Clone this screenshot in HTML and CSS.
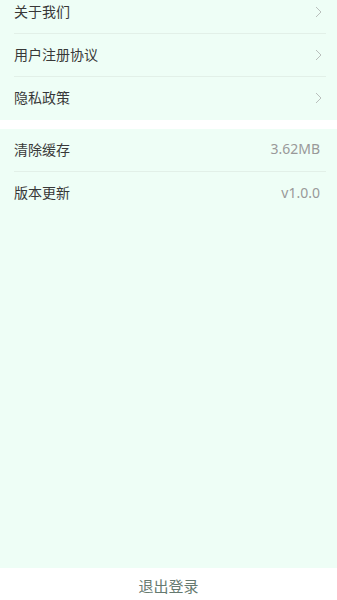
FILE: index.html
```html
<!DOCTYPE html>
<html lang="zh-CN">

<head>
    <meta charset="UTF-8">
    <title>设置</title>
    <link rel="stylesheet" href="styles.css">
</head>

<body>
    <div class="page">
        <div class="group group_top">
            <div class="cell">
                <span class="label">关于我们</span>
                <svg class="arrow" width="7" height="12" viewBox="0 0 7 12"><path d="M1 1l5 5-5 5" fill="none" stroke="#b9bfbc" stroke-width="1"/></svg>
            </div>
            <div class="cell">
                <span class="label">用户注册协议</span>
                <svg class="arrow" width="7" height="12" viewBox="0 0 7 12"><path d="M1 1l5 5-5 5" fill="none" stroke="#b9bfbc" stroke-width="1"/></svg>
            </div>
            <div class="cell">
                <span class="label">隐私政策</span>
                <svg class="arrow" width="7" height="12" viewBox="0 0 7 12"><path d="M1 1l5 5-5 5" fill="none" stroke="#b9bfbc" stroke-width="1"/></svg>
            </div>
        </div>

        <div class="group group_fill">
            <div class="cell">
                <span class="label">清除缓存</span>
                <span class="value">3.62MB</span>
            </div>
            <div class="cell">
                <span class="label">版本更新</span>
                <span class="value">v1.0.0</span>
            </div>
        </div>

        <div class="logout">退出登录</div>
    </div>
</body>

</html>
```

FILE: styles.css
```css
* {
    margin: 0;
    padding: 0;
    box-sizing: border-box;
}

body {
    background: #fff;
    font-family: "Noto Sans CJK SC", "Noto Sans", sans-serif;
    overflow: hidden;
}

.page {
    height: 100vh;
    display: flex;
    flex-direction: column;
}

.group {
    background: #eefef6;
    padding: 0 11px 0 14px;
}

.group_top {
    margin-top: -9px;
    margin-bottom: 9px;
}

.group_fill {
    flex: 1;
}

.cell {
    height: 43px;
    padding-bottom: 3px;
    display: flex;
    align-items: center;
    justify-content: space-between;
    border-bottom: 1px solid #e2f0e8;
}

.cell:last-child {
    border-bottom: none;
}

.label {
    font-size: 14px;
    color: #383838;
}

.value {
    font-family: "Noto Sans", Roboto, sans-serif;
    font-size: 14px;
    color: #999;
    margin-right: 6px;
}

.arrow {
    margin-right: 4px;
    margin-top: 2px;
}

.logout {
    height: 32px;
    line-height: 36px;
    text-align: center;
    font-size: 15px;
    color: #667a70;
    background: #fff;
}
```
